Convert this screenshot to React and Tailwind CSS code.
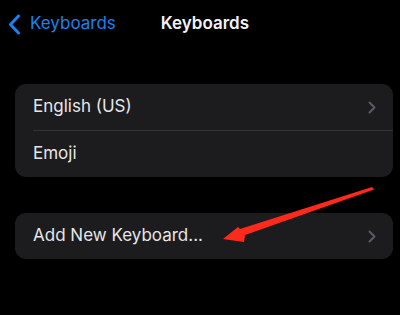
import React from 'react';

const Chevron = ({ className = '' }) => (
  <svg className={className} width="8" height="13" viewBox="0 0 8 13" fill="none" aria-hidden="true">
    <path d="M1.5 1.5L6.5 6.5L1.5 11.5" stroke="currentColor" strokeWidth="2" strokeLinecap="round" strokeLinejoin="round" />
  </svg>
);

const BackChevron = () => (
  <svg width="13" height="21" viewBox="0 0 13 21" fill="none" aria-hidden="true">
    <path d="M10.5 2L2.5 10.5L10.5 19" stroke="currentColor" strokeWidth="3" strokeLinecap="round" strokeLinejoin="round" />
  </svg>
);

const Row = ({ label, chevron }) => (
  <div className="flex h-[46px] items-center justify-between pr-[17px]">
    <span className="text-[17px] text-[#e6e6e8]">{label}</span>
    {chevron && <Chevron className="text-[#5b5b60]" />}
  </div>
);

export default function App() {
  return (
    <div
      className="relative h-[315px] w-[400px] overflow-hidden bg-black"
      style={{ fontFamily: 'Inter, "Noto Sans", sans-serif' }}
    >
      {/* Nav bar */}
      <div className="flex h-[48px] items-center pl-[8px]">
        <div className="flex items-center gap-[9px] text-[#1a82f0]">
          <BackChevron />
          <span className="text-[17px]">Keyboards</span>
        </div>
        <span className="ml-[45px] text-[17px] font-semibold text-[#f2f2f4]">Keyboards</span>
      </div>

      <div className="mt-[36px] flex flex-col gap-[36px] pl-[15px] pr-[7px]">
        <div className="rounded-[11px] bg-[#1c1c1e] pl-[18px]">
          <Row label="English (US)" chevron />
          <div className="h-px bg-[#333336]" />
          <Row label="Emoji" />
        </div>
        <div className="rounded-[11px] bg-[#1c1c1e] pl-[18px]">
          <Row label="Add New Keyboard..." chevron />
        </div>
      </div>

      {/* Red annotation arrow */}
      <svg className="absolute left-0 top-0" width="400" height="315" aria-hidden="true">
        <polygon
          points="372,187 374,189.5 245,235 244,242 223,239 238,227 240,229"
          fill="#ff2a1c"
        />
      </svg>
    </div>
  );
}
